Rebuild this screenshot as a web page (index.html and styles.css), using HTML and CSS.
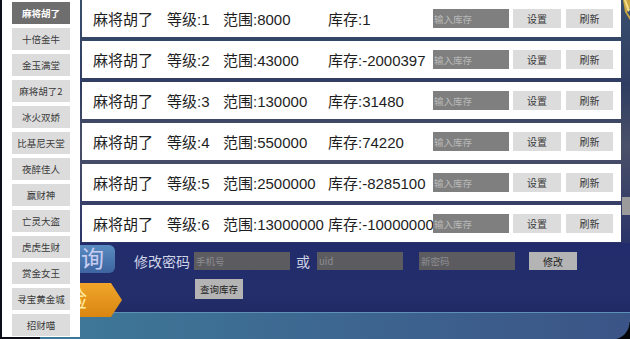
FILE: index.html
```html
<!DOCTYPE html>
<html lang="zh-CN">
<head>
<meta charset="utf-8">
<title>库存管理</title>
<link rel="stylesheet" href="styles.css">
</head>
<body>
<div class="screen">
  <div class="backdrop">
    <div class="bd-upper"></div>
    <div class="bd-navy"></div>
    <div class="bd-strip"></div>
    <div class="bd-query">询</div>
    <div class="bd-orange"></div>
    <div class="bd-orange-clip"><span>验</span></div>
    <svg class="bd-close" width="10" height="24" viewBox="0 0 10 24"><path d="M2 0 L10 0 L10 6 L6 12 L10 18 L10 22 L4 12 Z" fill="#c9a640"/><path d="M3 0 L5 0 L9 10 L7 12 Z" fill="#f2dc8a"/></svg>
    <div class="bd-tab"></div>
    <div class="bd-corner"></div>
  </div>
  <div class="layout">
    <nav class="sidebar">
      <button class="game active">麻将胡了</button>
      <button class="game">十倍金牛</button>
      <button class="game">金玉满堂</button>
      <button class="game">麻将胡了2</button>
      <button class="game">冰火双娇</button>
      <button class="game">比基尼天堂</button>
      <button class="game">夜醉佳人</button>
      <button class="game">赢财神</button>
      <button class="game">亡灵大盗</button>
      <button class="game">虎虎生财</button>
      <button class="game">赏金女王</button>
      <button class="game">寻宝黄金城</button>
      <button class="game">招财喵</button>
    </nav>
    <main class="main">
      <div class="rows">
        <div class="row"><span class="c-name">麻将胡了</span><span class="c-level">等级:1</span><span class="c-range">范围:8000</span><span class="c-stock">库存:1</span><input class="stock-input" placeholder="输入库存"><button class="btn set">设置</button><button class="btn refresh">刷新</button></div>
        <div class="row"><span class="c-name">麻将胡了</span><span class="c-level">等级:2</span><span class="c-range">范围:43000</span><span class="c-stock">库存:-2000397</span><input class="stock-input" placeholder="输入库存"><button class="btn set">设置</button><button class="btn refresh">刷新</button></div>
        <div class="row"><span class="c-name">麻将胡了</span><span class="c-level">等级:3</span><span class="c-range">范围:130000</span><span class="c-stock">库存:31480</span><input class="stock-input" placeholder="输入库存"><button class="btn set">设置</button><button class="btn refresh">刷新</button></div>
        <div class="row"><span class="c-name">麻将胡了</span><span class="c-level">等级:4</span><span class="c-range">范围:550000</span><span class="c-stock">库存:74220</span><input class="stock-input" placeholder="输入库存"><button class="btn set">设置</button><button class="btn refresh">刷新</button></div>
        <div class="row"><span class="c-name">麻将胡了</span><span class="c-level">等级:5</span><span class="c-range">范围:2500000</span><span class="c-stock">库存:-8285100</span><input class="stock-input" placeholder="输入库存"><button class="btn set">设置</button><button class="btn refresh">刷新</button></div>
        <div class="row"><span class="c-name">麻将胡了</span><span class="c-level">等级:6</span><span class="c-range">范围:13000000</span><span class="c-stock">库存:-10000000</span><input class="stock-input" placeholder="输入库存"><button class="btn set">设置</button><button class="btn refresh">刷新</button></div>
      </div>
      <div class="pwd">
        <span class="pwd-label">修改密码</span>
        <input class="pwd-input phone" placeholder="手机号">
        <span class="pwd-or">或</span>
        <input class="pwd-input uid" placeholder="uid">
        <input class="pwd-input newpwd" placeholder="新密码">
        <button class="pwd-btn">修改</button>
      </div>
      <div class="query">
        <button class="query-btn">查询库存</button>
      </div>
    </main>
  </div>
</div>
</body>
</html>
```
FILE: styles.css
```css
* { box-sizing: border-box; }
html, body { margin: 0; padding: 0; }
body {
  width: 630px;
  height: 339px;
  overflow: hidden;
  background: #0b0d18;
  font-family: "Liberation Sans", "Noto Sans CJK SC", sans-serif;
}
.screen {
  position: relative;
  width: 630px;
  height: 339px;
  overflow: hidden;
}
.backdrop {
  position: absolute;
  inset: 0;
}
.bd-upper {
  position: absolute;
  left: 40px; top: 0; width: 590px; height: 243px;
  background: linear-gradient(180deg, #3a4f6e 0%, #2f3d62 35%, #4a5068 60%, #2a3468 100%);
}
.bd-navy {
  position: absolute;
  left: 40px; top: 243px; width: 590px; height: 70px;
  background: linear-gradient(180deg, #222c6c 0%, #232e6b 70%, #212a64 100%);
}
.bd-strip {
  position: absolute;
  left: 40px; top: 312px; width: 590px; height: 27px;
  border-top: 1px solid #5f90b8;
  background: linear-gradient(90deg, #3e7a98 0%, #3d6690 50%, #3b5487 100%);
}
.bd-query {
  position: absolute;
  left: 40px; top: 245px; width: 75px; height: 28px;
  border-radius: 6px;
  background: linear-gradient(180deg, #5a8cc0 0%, #3d64a0 100%);
  color: #c8cdf4;
  font-size: 23px;
  line-height: 28px;
  text-align: right;
  padding-right: 11px;
}
.bd-orange {
  position: absolute;
  left: 30px; top: 283px; width: 92px; height: 34px;
  background: linear-gradient(180deg, #f0a52a 0%, #d98610 100%);
  clip-path: polygon(0 0, 88% 0, 100% 50%, 88% 100%, 0 100%);
}
.bd-orange-clip {
  position: absolute;
  left: 80px; top: 283px; width: 7px; height: 34px;
  overflow: hidden;
  color: #ffe9a0;
  font-size: 22px;
  line-height: 34px;
}
.bd-orange-clip span {
  display: block;
  width: 22px;
  margin-left: -15px;
}
.bd-close {
  position: absolute;
  left: 621px; top: 0;
}
.bd-tab {
  position: absolute;
  left: 622px; top: 197px; width: 8px; height: 18px;
  background: #9b9b9b;
}
.bd-corner {
  position: absolute;
  left: 612px; top: 322px; width: 18px; height: 17px;
  background: radial-gradient(circle at 0 0, transparent 17px, #05060a 18px);
}
.layout {
  position: relative;
  display: flex;
  align-items: flex-start;
}
.sidebar {
  width: 78px;
  height: 337px;
  margin-left: 2px;
  background: #ffffff;
  padding: 2px 0 0 10px;
  display: flex;
  flex-direction: column;
  gap: 4px;
}
.game {
  width: 58px;
  height: 22px;
  border: none;
  margin: 0;
  padding: 0;
  background: #dcdcdc;
  color: #3a3a3a;
  font-family: "Noto Sans CJK SC", sans-serif;
  font-size: 9.5px;
  line-height: 22px;
  text-align: center;
}
.game.active {
  background: #6e6e6e;
  color: #ffffff;
  font-weight: bold;
}
.main {
  margin-left: 2px;
  width: 539px;
}
.rows {
  display: flex;
  flex-direction: column;
  gap: 4px;
}
.row {
  height: 37px;
  background: #ffffff;
  display: flex;
  align-items: center;
  padding-left: 11px;
  font-size: 15px;
  color: #1e1e1e;
  white-space: nowrap;
}
.c-name { width: 74px; }
.c-level { width: 56px; }
.c-range { width: 105px; }
.c-stock { width: 105px; }
.stock-input {
  width: 76px;
  height: 19px;
  border: none;
  margin: 0;
  padding: 0 0 0 1px;
  background: #7f7f7f;
  font-family: "Noto Sans CJK SC", sans-serif;
  font-size: 9.5px;
  color: #eee;
  outline: none;
}
.stock-input::placeholder { color: #b9b9b9; }
.btn {
  height: 19px;
  border: none;
  margin: 0;
  padding: 0;
  background: #dcdcdc;
  color: #3a3a3a;
  font-family: "Noto Sans CJK SC", sans-serif;
  font-size: 10px;
}
.btn.set { width: 48px; margin-left: 4px; }
.btn.refresh { width: 47px; margin-left: 5px; }
.pwd {
  margin-top: 10px;
  height: 18px;
  display: flex;
  align-items: center;
  padding-left: 52px;
}
.pwd-label {
  width: 56px;
  font-family: "Noto Sans CJK SC", sans-serif;
  font-size: 14px;
  color: #cfd3e6;
  line-height: 18px;
  white-space: nowrap;
}
.pwd-input {
  height: 18px;
  border: none;
  margin: 0;
  padding: 0 0 0 2px;
  background: #5c5c60;
  font-family: "Noto Sans CJK SC", sans-serif;
  font-size: 9.5px;
  color: #ddd;
  outline: none;
}
.pwd-input::placeholder { color: #8d8d92; }
.pwd-input.phone { width: 96px; margin-left: 4px; }
.pwd-or {
  width: 14px;
  margin: 0 7px 0 6px;
  font-family: "Noto Sans CJK SC", sans-serif;
  font-size: 14px;
  color: #cfd3e6;
  line-height: 18px;
}
.pwd-input.uid { width: 86px; }
.pwd-input.newpwd { width: 96px; margin-left: 16px; }
.pwd-btn {
  width: 48px;
  height: 18px;
  margin: 0 0 0 14px;
  padding: 0;
  border: none;
  background: #b4b4b4;
  color: #222;
  font-family: "Noto Sans CJK SC", sans-serif;
  font-size: 10px;
}
.query {
  margin-top: 9px;
  padding-left: 113px;
}
.query-btn {
  width: 48px;
  height: 20px;
  margin: 0;
  padding: 0;
  border: none;
  background: #b4b4b4;
  color: #222;
  font-family: "Noto Sans CJK SC", sans-serif;
  font-size: 9.5px;
}
```
